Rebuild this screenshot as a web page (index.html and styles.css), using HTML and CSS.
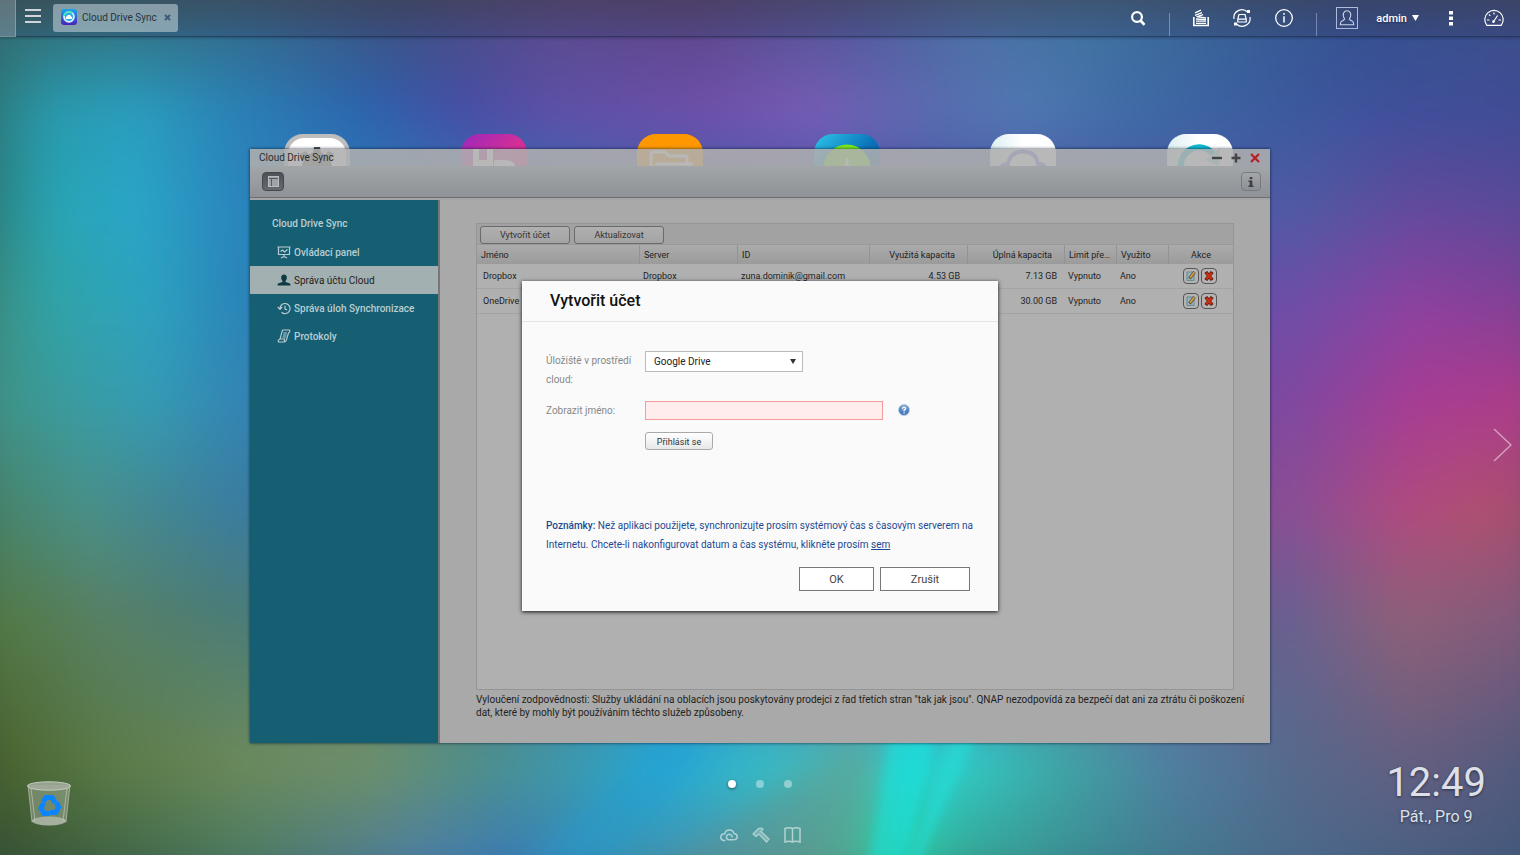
FILE: index.html
```
<!DOCTYPE html>
<html lang="cs">
<head>
<meta charset="utf-8">
<title>Cloud Drive Sync</title>
<link rel="stylesheet" href="styles.css">
</head>
<body>
<div class="desktop">
  <div class="wallpaper" aria-hidden="true">
    <div class="bands">
      <div class="band band-9"></div>
      <div class="band band-8"></div>
      <div class="band band-7"></div>
      <div class="band band-6"></div>
      <div class="band band-5"></div>
      <div class="band band-4"></div>
      <div class="band band-3"></div>
      <div class="band band-2"></div>
      <div class="band band-1"></div>
    </div>
    <svg class="rays" viewBox="0 0 1520 855" preserveAspectRatio="none">
      <defs><filter id="soft"><feGaussianBlur stdDeviation="5"/></filter><filter id="softer"><feGaussianBlur stdDeviation="14"/></filter></defs>
      <path d="M890 730H935L905 870H868Z" fill="#18e4e0" opacity=".5" filter="url(#soft)"/>
      <path d="M955 730H980L915 870H905Z" fill="#20e0d8" opacity=".55" filter="url(#soft)"/>
      <path d="M660 735H720L600 870H520Z" fill="#1c9ed8" opacity=".4" filter="url(#softer)"/>
      <path d="M850 745L640 880H850L880 745Z" fill="#6a8a80" opacity=".3" filter="url(#softer)"/>
    </svg>
  </div>

  <header class="topbar">
    <div class="edge"></div>
    <button class="icon-btn menu" aria-label="Menu"><svg width="16" height="14" viewBox="0 0 16 14"><path d="M0 1H16M0 7H16M0 13H16" stroke="#fff" stroke-width="1.3"/></svg></button>
    <div class="task">
      <svg width="16" height="16" viewBox="0 0 16 16"><defs><linearGradient id="ti" x2="0" y2="1"><stop stop-color="#1aa6ee"/><stop offset="1" stop-color="#4a22b8"/></linearGradient></defs><rect width="16" height="16" rx="3" fill="url(#ti)"/><circle cx="8" cy="7.800" r="5" fill="#2aa8e8" stroke="#d8f6ff" stroke-width="1.700"/><path d="M3 7A5 5 0 0 1 11 3.800" fill="none" stroke="#35e0b0" stroke-width="1.500"/><path d="M5.300 10A1.700 1.700 0 0 1 5.800 7.200A2.300 2.300 0 0 1 10.200 7.400A1.400 1.400 0 0 1 10.600 10Z" fill="#fff"/></svg>
      <span>Cloud Drive Sync</span>
      <button class="icon-btn" aria-label="Zavřít"><svg width="7" height="7" viewBox="0 0 7 7"><path d="M1 1L6 6M6 1L1 6" stroke="#3d5c7c" stroke-width="2"/></svg></button>
    </div>
    <nav class="tray">
      <button class="icon-btn" aria-label="Hledat"><svg width="18" height="18" viewBox="0 0 18 18"><circle cx="8" cy="8" r="4.900" fill="none" stroke="#fff" stroke-width="2.200"/><path d="M11.500 11.500L15.500 15.800" stroke="#fff" stroke-width="2.600"/></svg></button>
      <span class="sep"></span>
      <button class="icon-btn" aria-label="Úlohy"><svg width="18" height="20" viewBox="0 0 18 20"><path d="M1.800 9V17.500H16.200V9" fill="none" stroke="#fff" stroke-width="1.600"/><path d="M4 15.300H14M4 13.200H14M4 11L14 11.600M4.500 8.700L14 10M3 7.300L10 4.600M3 4.800L9 2.200M4.500 8.800L11 6.700" stroke="#fff" stroke-width="1.300"/></svg></button>
      <button class="icon-btn" aria-label="Externí zařízení"><svg width="20" height="20" viewBox="0 0 20 20"><g fill="none" stroke="#fff" stroke-width="1.200"><path d="M2 11A8 8 0 0 1 15.500 4M18 9A8 8 0 0 1 4.500 16"/><path d="M7 6.500H13L14.200 11.200V14H5.800V11.200ZM5.800 11.200H14.200"/></g><rect x="15" y="2" width="3" height="3" fill="#fff"/><rect x="2" y="14.500" width="3" height="3" fill="#fff"/></svg></button>
      <button class="icon-btn" aria-label="Informace"><svg width="20" height="20" viewBox="0 0 20 20"><circle cx="10" cy="10" r="8.300" fill="none" stroke="#fff" stroke-width="1.300"/><path d="M10 8.300V14.500M10 5V6.700" stroke="#fff" stroke-width="1.500"/></svg></button>
      <span class="sep"></span>
      <button class="icon-btn user"><svg width="22" height="22" viewBox="0 0 22 22"><rect x=".5" y=".5" width="21" height="21" fill="none" stroke="#aebbdc"/><path d="M8.600 12Q6.500 8.500 7.600 6Q8.800 3.800 11 3.800Q13.200 3.800 14.400 6Q15.500 8.500 13.400 12Q14 13.500 16 14Q17.700 14.700 17.700 17.800H4.300Q4.300 14.700 6 14Q8 13.500 8.600 12Z" fill="none" stroke="#c9d2e8" stroke-width="1.100"/></svg><span>admin</span><svg width="7" height="6" viewBox="0 0 7 6"><path d="M0 0H7L3.500 6Z" fill="#fff"/></svg></button>
      <button class="icon-btn more" aria-label="Další"><svg width="4" height="16" viewBox="0 0 4 16"><path d="M0 1H4V4.500H0ZM0 6.500H4V10H0ZM0 12H4V15.500H0Z" fill="#fff"/></svg></button>
      <button class="icon-btn gauge" aria-label="Přehled"><svg width="22" height="18" viewBox="0 0 22 18"><path d="M3.800 16.300A9.200 9.200 0 1 1 18.200 16.300Z" fill="none" stroke="#fff" stroke-width="1.200"/><path d="M4 11H6.500M15.500 11H18M6 5.500L7.300 6.800M11 3.500V5.500M10 13.500L14.600 6.500" stroke="#fff" stroke-width="1.200"/><circle cx="10.500" cy="12.600" r="1.300" fill="#fff"/></svg></button>
    </nav>
  </header>

  <div class="apps" aria-hidden="true">
    <svg viewBox="0 0 66 66"><rect width="66" height="66" rx="19" fill="#bdbdbd"/><rect x="4" y="4" width="58" height="58" rx="16" fill="#fff"/><g fill="#4b4f57"><circle cx="33" cy="33" r="15"/><path d="M30 13H36L38 24H28ZM16 20L22 17L28 26L21 29ZM50 20L44 17L38 26L45 29Z"/></g></svg>
    <svg viewBox="0 0 66 66"><defs><linearGradient id="hd" x2="1" y2="1"><stop stop-color="#9a28bd"/><stop offset=".5" stop-color="#d42e98"/><stop offset="1" stop-color="#f02a70"/></linearGradient></defs><rect width="66" height="66" rx="19" fill="url(#hd)"/><path d="M15 15V44M29 15V44M15 29H29M36 29V46H43Q52 46 52 37Q52 29 43 29Z" fill="none" stroke="#fff" stroke-width="6"/></svg>
    <svg viewBox="0 0 66 66"><rect width="66" height="66" rx="19" fill="#ff9800"/><path d="M14 46V20Q14 18 16 18H28L32 22H48Q50 22 50 24V30M20 30H54L48 48H14Z" fill="none" stroke="#fff" stroke-width="3"/></svg>
    <svg viewBox="0 0 66 66"><defs><linearGradient id="bk" x2="1" y2="1"><stop stop-color="#2dc6ea"/><stop offset=".5" stop-color="#0b73b9"/><stop offset="1" stop-color="#084b94"/></linearGradient></defs><rect width="66" height="66" rx="19" fill="url(#bk)"/><circle cx="33" cy="34" r="20" fill="none" stroke="#79e81c" stroke-width="7"/><circle cx="33" cy="34" r="17" fill="#79e81c"/><path d="M33 24V40" stroke="#fff" stroke-width="3"/></svg>
    <svg viewBox="0 0 66 66"><defs><linearGradient id="wh" x2="1"><stop stop-color="#dceff2"/><stop offset=".5" stop-color="#fff"/></linearGradient></defs><rect width="66" height="66" rx="19" fill="url(#wh)"/><path d="M12 44A8 8 0 0 1 18 30Q20 17.500 33 17.500Q46 17.500 48 30A8 8 0 0 1 54 44" fill="none" stroke="#6469e8" stroke-width="4"/><circle cx="33" cy="40" r="8" fill="#6469e8"/></svg>
    <svg viewBox="0 0 66 66"><rect width="66" height="66" rx="19" fill="url(#wh)"/><path d="M16 40A18 18 0 0 1 48 23" fill="none" stroke="#10b8d2" stroke-width="6"/><path d="M38 26L53 14L52 32Z" fill="#8adbe6"/></svg>
  </div>

  <section class="window">
    <div class="titlebar">
      <span>Cloud Drive Sync</span>
      <div class="win-btns">
        <button class="icon-btn" aria-label="Minimalizovat"><svg width="10" height="10" viewBox="0 0 10 10"><path d="M0 5H10" stroke="#444" stroke-width="2.4"/></svg></button>
        <button class="icon-btn" aria-label="Maximalizovat"><svg width="10" height="10" viewBox="0 0 10 10"><path d="M.5 5H9.500M5 .5V9.500" stroke="#444" stroke-width="2.400"/></svg></button>
        <button class="icon-btn" aria-label="Zavřít okno"><svg width="10" height="10" viewBox="0 0 10 10"><path d="M1 1L9 9M9 1L1 9" stroke="#b81f1f" stroke-width="2.200"/></svg></button>
      </div>
    </div>
    <div class="toolbar">
      <button class="tool dark" aria-label="Panel"><svg width="11" height="11" viewBox="0 0 11 11"><rect x=".5" y=".5" width="10" height="10" fill="#a0a4aa" stroke="#b8bbc0"/><path d="M1 2.500H10M3.500 3V10" stroke="#565a62" stroke-width="1"/></svg></button>
      <button class="tool" aria-label="Nápověda"><svg width="6" height="10" viewBox="0 0 6 10"><path d="M1.700 0H4.300V2.200H1.700ZM.5 3.500H4.300V8.500H5.500V10H.5V8.500H1.700V5H.5Z" fill="#3c3f44"/></svg></button>
    </div>
    <div class="content">
      <nav class="side">
        <h2>Cloud Drive Sync</h2>
        <a href="#panel"><svg width="14" height="13" viewBox="0 0 14 13"><path d="M.5 1H13.500M1.500 1V8.500H12.500V1M7 8.500V11M4 12L7 10.500L10 12M3.500 5.500L5.500 4L7.500 6L10.500 3.500" fill="none" stroke="#b9cdd2" stroke-width="1.200"/></svg>Ovládací panel</a>
        <a href="#ucty" class="active"><svg width="14" height="12" viewBox="0 0 14 12"><path d="M5.500 7Q3.800 5 4.200 2.500Q5 .5 7 .5Q9 .5 9.800 2.500Q10.200 5 8.500 7V8L13 9.500Q13.500 10 13.500 11.500H.5Q.5 10 1 9.500L5.500 8Z" fill="#0c3a45"/></svg>Správa účtu Cloud</a>
        <a href="#ulohy"><svg width="14" height="13" viewBox="0 0 14 13"><path d="M3 6.500A5 5 0 1 1 4.600 10.200M.8 5L3 7.300L5.200 5M8 3.800V7L10.200 8" fill="none" stroke="#b9cdd2" stroke-width="1.200"/></svg>Správa úloh Synchronizace</a>
        <a href="#protokoly"><svg width="14" height="14" viewBox="0 0 14 14"><path d="M5.500 1H12.500Q13.500 3 11.500 4L9.500 10.500Q9 13 7 13H1.500Q.5 11 3 10L5.500 1M3 10H7.500Q7 12 8 13M6.500 4H10M6 6H9.500M5.500 8H9" fill="none" stroke="#b9cdd2" stroke-width="1.100"/></svg>Protokoly</a>
      </nav>
      <main class="main">
        <div class="panel">
          <div class="actions"><button class="small">Vytvořit účet</button><button class="small">Aktualizovat</button></div>
          <table class="accounts">
            <colgroup><col><col class="c-98"><col class="c-132"><col class="c-98"><col class="c-97"><col class="c-52"><col class="c-52"><col class="c-64"></colgroup>
            <thead><tr><th>Jméno</th><th>Server</th><th>ID</th><th class="num">Využitá kapacita</th><th class="num">Úplná kapacita</th><th>Limit pře…</th><th>Využito</th><th class="mid">Akce</th></tr></thead>
            <tbody>
              <tr><td>Dropbox</td><td>Dropbox</td><td>zuna.dominik@gmail.com</td><td class="num">4.53 GB</td><td class="num">7.13 GB</td><td>Vypnuto</td><td>Ano</td><td class="mid"><div class="acts">
                <button class="act" aria-label="Upravit Dropbox"><svg width="16" height="16" viewBox="0 0 16 16"><rect x=".5" y=".5" width="15" height="15" rx="3.500" fill="#b4b4b4" stroke="#555"/><rect x="4" y="4" width="7" height="8.500" fill="#8fb4c0" stroke="#54777f" stroke-width=".7"/><path d="M6.500 10.500L11.500 4" stroke="#4d4028" stroke-width="3"/><path d="M7 9.800L11.300 4.200" stroke="#cf9c45" stroke-width="1.900"/></svg></button><button class="act" aria-label="Odstranit Dropbox"><svg width="16" height="16" viewBox="0 0 16 16"><rect x=".5" y=".5" width="15" height="15" rx="3.500" fill="#b4b4b4" stroke="#555"/><path d="M4.800 4L11.200 12M11.200 4L4.800 12" stroke="#551408" stroke-width="3.600"/><path d="M5.300 4.700L10.700 11.300M10.700 4.700L5.300 11.300" stroke="#c9300f" stroke-width="2.300"/></svg></button></div></td></tr>
              <tr><td>OneDrive</td><td>OneDrive</td><td></td><td class="num"></td><td class="num">30.00 GB</td><td>Vypnuto</td><td>Ano</td><td class="mid"><div class="acts">
                <button class="act" aria-label="Upravit OneDrive"><svg width="16" height="16" viewBox="0 0 16 16"><rect x=".5" y=".5" width="15" height="15" rx="3.500" fill="#b4b4b4" stroke="#555"/><rect x="4" y="4" width="7" height="8.500" fill="#8fb4c0" stroke="#54777f" stroke-width=".7"/><path d="M6.500 10.500L11.500 4" stroke="#4d4028" stroke-width="3"/><path d="M7 9.800L11.300 4.200" stroke="#cf9c45" stroke-width="1.900"/></svg></button><button class="act" aria-label="Odstranit OneDrive"><svg width="16" height="16" viewBox="0 0 16 16"><rect x=".5" y=".5" width="15" height="15" rx="3.500" fill="#b4b4b4" stroke="#555"/><path d="M4.800 4L11.200 12M11.200 4L4.800 12" stroke="#551408" stroke-width="3.600"/><path d="M5.300 4.700L10.700 11.300M10.700 4.700L5.300 11.300" stroke="#c9300f" stroke-width="2.300"/></svg></button></div></td></tr>
            </tbody>
          </table>
        </div>
        <p class="disclaimer">Vyloučení zodpovědnosti: Služby ukládání na oblacích jsou poskytovány prodejci z řad třetích stran "tak jak jsou". QNAP nezodpovídá za bezpečí dat ani za ztrátu či poškození dat, které by mohly být používáním těchto služeb způsobeny.</p>
      </main>
    </div>
    <div class="modal-layer">
      <form class="dialog" role="dialog" aria-labelledby="dlg">
        <h1 id="dlg">Vytvořit účet</h1>
        <div class="dialog-body">
          <div class="field tall"><label for="store">Úložiště v prostředí cloud:</label><div class="select"><select id="store"><option>Google Drive</option></select><svg width="6" height="5" viewBox="0 0 6 5"><path d="M0 0H6L3 5Z" fill="#333"/></svg></div></div>
          <div class="field"><label for="name">Zobrazit jméno:</label><input id="name" type="text"><svg class="help" width="12" height="12" viewBox="0 0 12 12"><defs><radialGradient id="q" cy=".3"><stop stop-color="#8fb4e0"/><stop offset="1" stop-color="#4277b8"/></radialGradient></defs><circle cx="6" cy="6" r="5.500" fill="url(#q)" stroke="#b9cfe8"/><path d="M4.400 4.800Q4.500 3 6 3Q7.700 3.100 7.600 4.500Q7.500 5.400 6.100 6.200V7.200M6.100 8.200V9.500" fill="none" stroke="#fff" stroke-width="1.200"/></svg></div>
          <div class="field"><span></span><button type="button" class="small light">Přihlásit se</button></div>
          <p class="note"><b>Poznámky:</b> Než aplikaci použijete, synchronizujte prosím systémový čas s časovým serverem na Internetu. Chcete-li nakonfigurovat datum a čas systému, klikněte prosím <a href="#cas">sem</a></p>
        </div>
        <div class="dialog-btns"><button type="button" class="ok">OK</button><button type="button">Zrušit</button></div>
      </form>
    </div>
  </section>

  <button class="icon-btn next" aria-label="Další plocha"><svg width="20" height="34" viewBox="0 0 20 34"><path d="M1 1L18 17L1 33" fill="none" stroke="#fff" stroke-opacity=".5" stroke-width="1.400"/></svg></button>

  <footer class="bottom">
    <svg class="trash" width="46" height="46" viewBox="0 0 46 46"><path d="M2 4L6 41Q23 48 40 41L44 4Z" fill="#d5d8d0" fill-opacity=".32"/><path d="M2 4L6 41M44 4L40 41M5 7L9 40M41 7L37 40" stroke="#d5d8d0" stroke-opacity=".55" fill="none"/><ellipse cx="23" cy="5" rx="21.500" ry="4.200" fill="#a9b0a2" fill-opacity=".8" stroke="#c5cabf"/><ellipse cx="23" cy="40" rx="17" ry="4.500" fill="#c8ccc2" fill-opacity=".6"/><g fill="none" stroke="#0a84ff" stroke-width="5"><path d="M17 21L20 16.500H26L29 21.500"/><path d="M17 21L20 16.500H26L29 21.500" transform="rotate(120 23.500 25)"/><path d="M17 21L20 16.500H26L29 21.500" transform="rotate(240 23.500 25)"/></g></svg>
    <div class="center">
      <div class="dots"><i class="on"></i><i></i><i></i></div>
      <div class="quick">
        <svg width="18" height="13" viewBox="0 0 18 13"><path d="M12 8.500A2.800 2.800 0 1 0 9.500 10.800H13.500Q17.200 10.800 17.200 7.800Q17.200 5 14 4.600Q13 1 9.500 1Q5.500 1 4.800 4.800Q.8 5 .8 8.200Q.8 11 3.800 11.500H5.500" fill="none" stroke="#fff" stroke-width="1.500"/></svg>
        <svg width="18" height="16" viewBox="0 0 18 16"><path d="M1 7L6.500 1.500Q9 .5 11 2L9 4.500L17 12L14.500 15L7 7L4 9.500Z" fill="#fff" fill-opacity=".45" stroke="#fff" stroke-width="1.200"/></svg>
        <svg width="17" height="16" viewBox="0 0 17 16"><path d="M1 1.500Q5 0 8.500 1.500Q12 0 16 1.500V15Q12 13.500 8.500 15Q5 13.500 1 15ZM8.500 1.500V15" fill="none" stroke="#fff" stroke-width="1.500"/></svg>
      </div>
    </div>
    <div class="clock"><div class="time">12:49</div><div class="date">Pát., Pro 9</div></div>
  </footer>
</div>
</body>
</html>
```
FILE: styles.css
```
* { box-sizing: border-box; }
body { margin: 0; font-family: Roboto, "Liberation Sans", sans-serif; font-size: 10px; color: #222; }
button, input, select { font: inherit; color: inherit; margin: 0; }
svg { display: block; flex: none; }
.icon-btn { display: flex; align-items: center; background: none; border: 0; padding: 0; color: #fff; }
.desktop { position: relative; min-height: 100vh; overflow: hidden; display: flex; flex-direction: column; }

/* wallpaper: horizontal colour bands, each one fading into the next */
.wallpaper, .band, .rays { position: absolute; inset: 0; width: 100%; height: 100%; }
.wallpaper { overflow: hidden; background: #3c5073; }
.bands { position: absolute; inset: -24px; filter: blur(16px); }
.band-1 { background: linear-gradient(90deg, #33686a 0, #346f7c 8%, #356888 17%, #3f5080 27%, #5a4a8a 37%, #5c4688 46%, #50589a 56%, #4b70a4 64%, #3f729f 71%, #3a6596 78%, #34518f 88%, #3c4f88); mask-image: linear-gradient(#000 4%, transparent 15%); }
.band-2 { background: linear-gradient(90deg, #2c7674 0, #299aae 5%, #2a9ebe 10%, #2a80b6 17%, #2c64ae 25%, #474ea6 31%, #5e50a8 37%, #6e50aa 46%, #785cb6 53%, #5a6cb0 61%, #5078b2 67%, #3f6ba6 74%, #3b5ca0 82%, #3f509b 90%, #404c96); mask-image: linear-gradient(#000 15%, transparent 25%); }
.band-3 { background: linear-gradient(90deg, #2b7a74 0, #28a4b4 5%, #2aa6c8 10%, #2a84bc 17%, #4456a8 50%, #4e5ba4 84%, #604a9c 92%, #584a98); mask-image: linear-gradient(#000 25%, transparent 36%); }
.band-4 { background: linear-gradient(90deg, #3c8878 0, #30a4a8 5%, #2da2c0 11%, #2a84b8 17%, #4456a8 50%, #6e4ea8 84%, #8c429f 92%, #804094); mask-image: linear-gradient(#000 36%, transparent 47%); }
.band-5 { background: linear-gradient(90deg, #409080 0, #3a9ca0 6%, #359cb4 11%, #3384b4 17%, #5a56a8 50%, #8048a0 84%, #a83c94 92%, #ae3c88); mask-image: linear-gradient(#000 47%, transparent 59%); }
.band-6 { background: linear-gradient(90deg, #468064 0, #4a9088 7%, #3a7ca0 17%, #5a56a8 50%, #8a4e94 84%, #b04a80 91%, #b05070 96%, #a04c70); mask-image: linear-gradient(#000 59%, transparent 71%); }
.band-7 { background: linear-gradient(90deg, #52783f 0, #588064 8%, #4a7c78 17%, #5a56a8 50%, #6a6090 84%, #8f6078 91%, #80587c); mask-image: linear-gradient(#000 71%, transparent 87%); }
.band-8 { background: linear-gradient(90deg, #465e2a 0, #5a7a46 8%, #6c8a5c 17%, #6f9068 25%, #509088 32%, #3f98a8 37%, #26acd6 44%, #34bcc8 50%, #50b8b0 56%, #24d8d8 60%, #30ccc8 63%, #3fa8a8 69%, #5080a0 76%, #56698c 84%, #655e80 92%, #505a7c); mask-image: linear-gradient(#000 87%, transparent 100%); }
.band-9 { background: linear-gradient(90deg, #324a30 0, #3c6042 8%, #467862 17%, #4a7a88 23%, #4a7ca8 28%, #3a78b8 34%, #3c90b0 41%, #4f90a4 47%, #5a9c90 53%, #40b890 56%, #2ccc98 59%, #38a08c 63%, #3c8490 72%, #4a6a8c 84%, #40567a); }

.topbar { position: relative; display: flex; align-items: center; height: 37px; padding-right: 15px; background: linear-gradient(rgba(60, 55, 65, .45), rgba(50, 60, 100, .3)); border-bottom: 1px solid rgba(20, 40, 70, .45); box-shadow: 0 1px 3px rgba(0, 20, 40, .3); }
.edge { width: 16px; height: 37px; background: rgba(255, 255, 255, .2); border: 1px solid rgba(255, 255, 255, .25); border-width: 0 1px 1px 0; }
.menu { margin: 0 12px 4px 9px; }
.task { display: flex; align-items: center; gap: 5px; height: 28px; padding: 0 7px 2px 8px; background: rgba(200, 215, 220, .55); border-radius: 3px; }
.task span { margin-right: 2px; color: #26343a; }
.tray { display: flex; align-items: center; gap: 22px; margin-left: auto; }
.sep { width: 1px; height: 23px; margin-top: 12px; background: rgba(200, 205, 235, .45); }
.user { gap: 5px; font-size: 11px; font-weight: 500; margin-left: -3px; text-shadow: 0 1px 2px rgba(0, 0, 0, .4); }
.user span { margin-left: 13px; }
.more { margin-left: 8px; }
.gauge { margin-left: 8px; }

.apps { position: absolute; top: 134px; left: 284px; right: 287px; height: 32px; overflow: hidden; display: flex; justify-content: space-between; }
.apps svg { width: 66px; height: 66px; }

.window { position: absolute; inset: 149px 250px 112px; display: flex; flex-direction: column; box-shadow: 0 0 3px rgba(0, 20, 40, .8); }
.titlebar { display: flex; align-items: center; justify-content: space-between; height: 17px; flex: none; padding: 0 10px 0 9px; background: rgba(174, 174, 174, .88); color: #2c2c2c; }
.win-btns { display: flex; gap: 9px; }
.toolbar { display: flex; align-items: center; justify-content: space-between; height: 32px; flex: none; padding: 0 9px 0 12px; background: linear-gradient(#a3a6a9, #8e9296); border-bottom: 1px solid #6b6d6f; }
.tool { display: flex; align-items: center; justify-content: center; width: 20px; height: 19px; padding: 0; border: 1px solid #777b80; border-radius: 4px; background: linear-gradient(#a4a6aa, #8d9095); }
.tool.dark { width: 22px; background: linear-gradient(#4c5158, #666b72); border-color: #44484e; }
.content { flex: 1; display: flex; min-height: 0; border-top: 2px solid #a5a5a5; background: #a9a9a9; }
.side { width: 190px; flex: none; padding-top: 10px; background: #165f73; border-right: 2px solid #777; color: #b9cdd2; }
.side h2 { margin: 0 0 0 22px; font-size: 10px; font-weight: 500; line-height: 28px; }
.side a { display: flex; align-items: center; gap: 3px; height: 28px; padding-left: 27px; color: inherit; font-weight: 500; text-decoration: none; }
.side a.active { background: #a2b0b1; color: #222; font-weight: 400; }
.main { flex: 1; display: flex; flex-direction: column; min-width: 0; padding: 23px 36px 24px; }
.panel { flex: 1; border: 1px solid #959595; background: #b0b0b0; }
.actions { display: flex; gap: 4px; height: 21px; padding: 2px 3px; background: #a2a2a2; border-bottom: 1px solid #999; }
.small { width: 90px; height: 18px; padding: 0; border: 1px solid #6a6a6a; border-radius: 3px; background: linear-gradient(#b0b0b0, #a3a3a3); font-size: 9px; color: #333; }
.small.light { width: 68px; border-color: #aaa; background: linear-gradient(#fff, #e8e8e8); }
.accounts { width: 100%; table-layout: fixed; border-collapse: separate; border-spacing: 0; }
.c-98 { width: 98px; }
.c-97 { width: 97px; }
.c-132 { width: 132px; }
.c-52 { width: 52px; }
.c-64 { width: 64px; }
.accounts th { height: 19px; padding: 0 0 0 4px; background: linear-gradient(#ababab, #9b9b9b); border-right: 1px solid #939393; font-weight: 400; font-size: 9px; text-align: left; white-space: nowrap; }
.accounts th:last-child { border-right: 0; }
.accounts td { height: 25px; padding: 0 0 0 3px; border-bottom: 1px solid #a3a3a3; font-size: 9px; white-space: nowrap; }
.accounts td:first-child { padding-left: 6px; }
.accounts th.num { text-align: right; padding-right: 12px; }
.accounts td.num { text-align: right; padding-right: 8px; }
.accounts th.mid { text-align: center; padding: 0; }
.acts { display: flex; justify-content: center; gap: 2px; padding-right: 6px; }
.act { padding: 0; border: 0; background: none; }
.disclaimer { margin: 3px -14px 0 0; line-height: 13px; }

.modal-layer { position: absolute; inset: 0; display: grid; place-items: center; }
.dialog { width: 476px; background: #fafafa; box-shadow: 0 1px 4px rgba(0, 0, 0, .9); }
.dialog h1 { margin: 0; padding-left: 28px; font-size: 16px; font-weight: 500; line-height: 40px; color: #111; border-bottom: 1px solid #e4e4e4; }
.dialog-body { padding: 29px 24px 0; line-height: 19px; }
.field { display: grid; grid-template-columns: 99px auto auto; justify-content: start; align-items: start; margin-bottom: 12px; color: #888; }
.field label { padding-right: 8px; }
.select { position: relative; }
.select select { appearance: none; width: 158px; height: 21px; padding: 0 8px; border: 1px solid #bbb; border-radius: 0; background: #fff; color: #222; }
.select svg { position: absolute; right: 7px; top: 8px; }
.field input { width: 238px; height: 19px; border: 1px solid #f79a9a; background: #ffeded; }
.help { margin: 3px 0 0 15px; }
.note { margin: 66px 0 0; color: #1c4a92; }
.note b { font-weight: 500; }
.note a { color: inherit; }
.dialog-btns { display: flex; justify-content: flex-end; gap: 6px; padding: 13px 28px 20px; }
.dialog-btns button { width: 90px; height: 24px; padding: 0; border: 1px solid #777; background: #fff; font-size: 11px; color: #444; }
.dialog-btns .ok { width: 75px; }

.next { position: absolute; right: 7px; top: 428px; }
.bottom { position: relative; margin-top: auto; display: grid; grid-template-columns: 1fr auto 1fr; align-items: end; padding: 0 26px 12px; }
.trash { margin-bottom: 16px; }
.center { display: grid; gap: 39px; justify-items: center; }
.dots { display: flex; gap: 20px; }
.dots i { width: 8px; height: 8px; border-radius: 50%; background: rgba(255, 255, 255, .4); }
.dots .on { background: #fff; box-shadow: 0 1px 3px rgba(0, 0, 0, .5); }
.quick { display: flex; align-items: center; gap: 14px; opacity: .55; }
.clock { justify-self: end; margin: 0 8px 14px 0; text-align: center; color: #dde0e8; text-shadow: 0 1px 3px rgba(0, 0, 0, .5); }
.time { font-size: 40px; line-height: 44px; }
.date { font-size: 16px; line-height: 24px; }
```
